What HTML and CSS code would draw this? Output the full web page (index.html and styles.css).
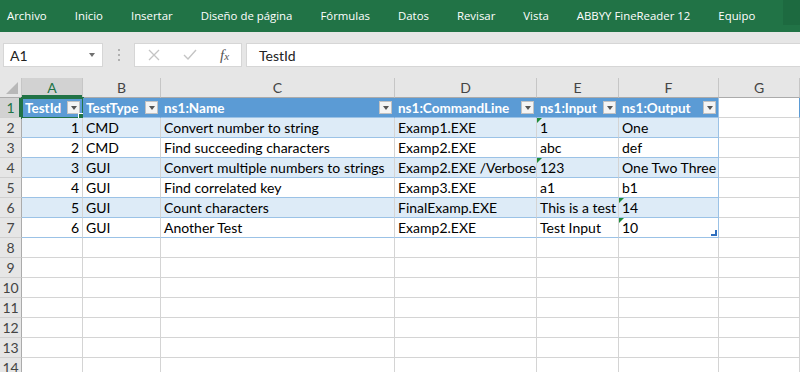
FILE: index.html
```html
<!DOCTYPE html>
<html lang="es">
<head>
    <meta charset="UTF-8">
    <meta name="viewport" content="width=device-width, initial-scale=1.0">
    <title>Libro1 - Excel</title>
    <link rel="stylesheet" href="styles.css">
</head>
<body>
    <div class="ribbon">
        <span class="tab">Archivo</span>
        <span class="tab">Inicio</span>
        <span class="tab">Insertar</span>
        <span class="tab">Diseño de página</span>
        <span class="tab">Fórmulas</span>
        <span class="tab">Datos</span>
        <span class="tab">Revisar</span>
        <span class="tab">Vista</span>
        <span class="tab">ABBYY FineReader 12</span>
        <span class="tab">Equipo</span>
        <span class="ribbon-end"></span>
    </div>

    <div class="formula-bar">
        <div class="name-box"><span>A1</span><span class="caret"></span></div>
        <div class="grip"><i></i><i></i><i></i></div>
        <div class="fx-buttons">
            <svg class="fx-btn" width="12" height="12" viewBox="0 0 12 12"><path d="M1 1 L11 11 M11 1 L1 11" stroke="#c4c4c4" stroke-width="1.3" fill="none"/></svg>
            <svg class="fx-btn" width="14" height="12" viewBox="0 0 14 12"><path d="M1 6 L5 10 L13 1" stroke="#c4c4c4" stroke-width="1.4" fill="none"/></svg>
            <span class="fx"><i>f<small>x</small></i></span>
        </div>
        <div class="formula-input">TestId</div>
    </div>

    <table class="sheet">
        <colgroup>
            <col style="width:22px">
            <col style="width:61px">
            <col style="width:78px">
            <col style="width:234px">
            <col style="width:142px">
            <col style="width:82px">
            <col style="width:100px">
            <col style="width:81px">
        </colgroup>
        <tr class="col-head">
            <th class="corner"><span class="corner-tri"></span></th>
            <th class="on">A</th>
            <th>B</th>
            <th>C</th>
            <th>D</th>
            <th>E</th>
            <th>F</th>
            <th>G</th>
        </tr>
        <tr class="tbl-head">
            <th class="rn on">1</th>
            <td class="sel"><div class="hd"><span>TestId</span><i class="filter"></i></div></td>
            <td><div class="hd"><span>TestType</span><i class="filter"></i></div></td>
            <td><div class="hd"><span>ns1:Name</span><i class="filter"></i></div></td>
            <td><div class="hd"><span>ns1:CommandLine</span><i class="filter"></i></div></td>
            <td><div class="hd"><span>ns1:Input</span><i class="filter"></i></div></td>
            <td class="last"><div class="hd"><span>ns1:Output</span><i class="filter"></i></div></td>
            <td class="free"></td>
        </tr>
        <tr class="band">
            <th class="rn">2</th>
            <td class="num">1</td>
            <td>CMD</td>
            <td>Convert number to string</td>
            <td>Examp1.EXE</td>
            <td class="err">1</td>
            <td class="last">One</td>
            <td class="free"></td>
        </tr>
        <tr class="plain">
            <th class="rn">3</th>
            <td class="num">2</td>
            <td>CMD</td>
            <td>Find succeeding characters</td>
            <td>Examp2.EXE</td>
            <td>abc</td>
            <td class="last">def</td>
            <td class="free"></td>
        </tr>
        <tr class="band">
            <th class="rn">4</th>
            <td class="num">3</td>
            <td>GUI</td>
            <td>Convert multiple numbers to strings</td>
            <td>Examp2.EXE /Verbose</td>
            <td class="err">123</td>
            <td class="last">One Two Three</td>
            <td class="free"></td>
        </tr>
        <tr class="plain">
            <th class="rn">5</th>
            <td class="num">4</td>
            <td>GUI</td>
            <td>Find correlated key</td>
            <td>Examp3.EXE</td>
            <td>a1</td>
            <td class="last">b1</td>
            <td class="free"></td>
        </tr>
        <tr class="band">
            <th class="rn">6</th>
            <td class="num">5</td>
            <td>GUI</td>
            <td>Count characters</td>
            <td>FinalExamp.EXE</td>
            <td>This is a test</td>
            <td class="last err">14</td>
            <td class="free"></td>
        </tr>
        <tr class="plain">
            <th class="rn">7</th>
            <td class="num">6</td>
            <td>GUI</td>
            <td>Another Test</td>
            <td>Examp2.EXE</td>
            <td>Test Input</td>
            <td class="last err resize">10</td>
            <td class="free"></td>
        </tr>
        <tr class="empty"><th class="rn">8</th><td></td><td></td><td></td><td></td><td></td><td></td><td></td></tr>
        <tr class="empty"><th class="rn">9</th><td></td><td></td><td></td><td></td><td></td><td></td><td></td></tr>
        <tr class="empty"><th class="rn">10</th><td></td><td></td><td></td><td></td><td></td><td></td><td></td></tr>
        <tr class="empty"><th class="rn">11</th><td></td><td></td><td></td><td></td><td></td><td></td><td></td></tr>
        <tr class="empty"><th class="rn">12</th><td></td><td></td><td></td><td></td><td></td><td></td><td></td></tr>
        <tr class="empty"><th class="rn">13</th><td></td><td></td><td></td><td></td><td></td><td></td><td></td></tr>
        <tr class="empty"><th class="rn">14</th><td></td><td></td><td></td><td></td><td></td><td></td><td></td></tr>
    </table>
</body>
</html>
```

FILE: styles.css
```css
* {
    padding: 0;
    margin: 0;
    box-sizing: border-box;
}

body {
    width: 800px;
    height: 372px;
    overflow: hidden;
    background-color: #ffffff;
    font-family: Lato, "Open Sans", sans-serif;
}

/* ribbon tabs */
.ribbon {
    height: 32px;
    display: flex;
    align-items: center;
    gap: 28px;
    padding: 0 0 2px 7px;
    background-color: #217346;
    color: #ffffff;
    font-family: "Open Sans", sans-serif;
    font-size: 11.4px;
    white-space: nowrap;
}

.ribbon-end {
    margin-left: auto;
    align-self: flex-start;
    width: 31px;
    height: 25px;
    background-color: #1d6a40;
}

/* name box + formula bar */
.formula-bar {
    height: 46px;
    display: flex;
    align-items: center;
    padding-left: 3px;
    background-color: #e6e6e6;
}

.name-box {
    width: 100px;
    height: 24px;
    display: flex;
    align-items: center;
    padding: 0 7px 0 6px;
    background: white;
    border: 1px solid #d6d6d6;
    font-size: 14px;
    color: #222;
}

.caret {
    margin-left: auto;
    border-top: 4px solid #707070;
    border-left: 3.5px solid transparent;
    border-right: 3.5px solid transparent;
}

.grip {
    width: 31px;
    display: flex;
    flex-direction: column;
    align-items: center;
    gap: 3px;
}

.grip i {
    width: 2px;
    height: 2px;
    background-color: #b0b0b0;
}

.fx-buttons {
    width: 108px;
    height: 24px;
    display: flex;
    align-items: center;
    padding-left: 13px;
    gap: 23px;
    background: white;
    border: 1px solid #d6d6d6;
}

.fx {
    font-family: "Liberation Serif", serif;
    font-size: 15px;
    color: #555;
}

.fx small {
    font-size: 11px;
}

.formula-input {
    flex: 1;
    height: 24px;
    margin-left: 4px;
    padding-left: 12px;
    display: flex;
    align-items: center;
    background: white;
    border: 1px solid #d6d6d6;
    border-right: none;
    font-size: 14px;
    color: #222;
}

/* grid */
.sheet {
    width: 800px;
    table-layout: fixed;
    border-collapse: separate;
    border-spacing: 0;
    font-size: 14px;
}

.sheet tr {
    height: 20px;
}

.sheet th {
    font-weight: normal;
    color: #444;
    background-color: #e6e6e6;
    font-size: 14px;
}

.col-head th {
    border-right: 1px solid #c6c6c6;
    border-bottom: 1px solid #ababab;
    text-align: center;
}

.col-head th.on {
    background-color: #d2d2d2;
    color: #217346;
    box-shadow: inset 0 -2px 0 #217346;
}

.corner {
    position: relative;
}

.corner-tri {
    position: absolute;
    right: 3px;
    bottom: 3px;
    border-bottom: 12px solid #b8b8b8;
    border-left: 12px solid transparent;
}

.rn {
    text-align: center;
    border-right: 1px solid #ababab;
    border-bottom: 1px solid #d0d0d0;
}

.rn.on {
    background-color: #d2d2d2;
    color: #217346;
    box-shadow: inset -2px 0 0 #217346;
}

.sheet td {
    position: relative;
    padding: 0 3px;
    white-space: nowrap;
    overflow: hidden;
    color: #000;
    border-right: 1px solid #d4d4d4;
    border-bottom: 1px solid #d4d4d4;
}

.sheet td.num {
    text-align: right;
}

.band td {
    background-color: #ddebf7;
}

.band td, .plain td {
    border-bottom-color: #9bc2e6;
}

.sheet td.free {
    background-color: #ffffff;
    border-bottom-color: #d4d4d4;
}

.sheet td.last {
    border-right-color: #9bc2e6;
}

/* table header row */
.tbl-head td {
    background-color: #5b9bd5;
    color: #ffffff;
    font-weight: bold;
    font-size: 13.5px;
    border-right-color: #5b9bd5;
    border-bottom-color: #9bc2e6;
    padding: 0 2px 0 3px;
}

.hd {
    display: flex;
    align-items: center;
    gap: 3px;
}

.hd span {
    flex: 1;
    overflow: hidden;
}

.filter {
    width: 13px;
    height: 13px;
    flex-shrink: 0;
    display: flex;
    align-items: center;
    justify-content: center;
    background-color: #f4f4f4;
    border: 1px solid #c2c2c2;
}

.filter::after {
    content: "";
    border-top: 4px solid #555;
    border-left: 3.5px solid transparent;
    border-right: 3.5px solid transparent;
}

.sheet td.sel {
    overflow: visible;
    outline: 2px solid #217346;
    outline-offset: -1px;
}

.sheet td.sel::after {
    content: "";
    position: absolute;
    right: -3px;
    bottom: -3px;
    width: 5px;
    height: 5px;
    background-color: #217346;
    border: 1px solid #ffffff;
}

.err::before {
    content: "";
    position: absolute;
    top: 0;
    left: 0;
    border-top: 5px solid #1e8c3a;
    border-right: 5px solid transparent;
}

.resize::after {
    content: "";
    position: absolute;
    right: 1px;
    bottom: 1px;
    width: 4px;
    height: 4px;
    border-right: 2px solid #2f6fbf;
    border-bottom: 2px solid #2f6fbf;
}
```
